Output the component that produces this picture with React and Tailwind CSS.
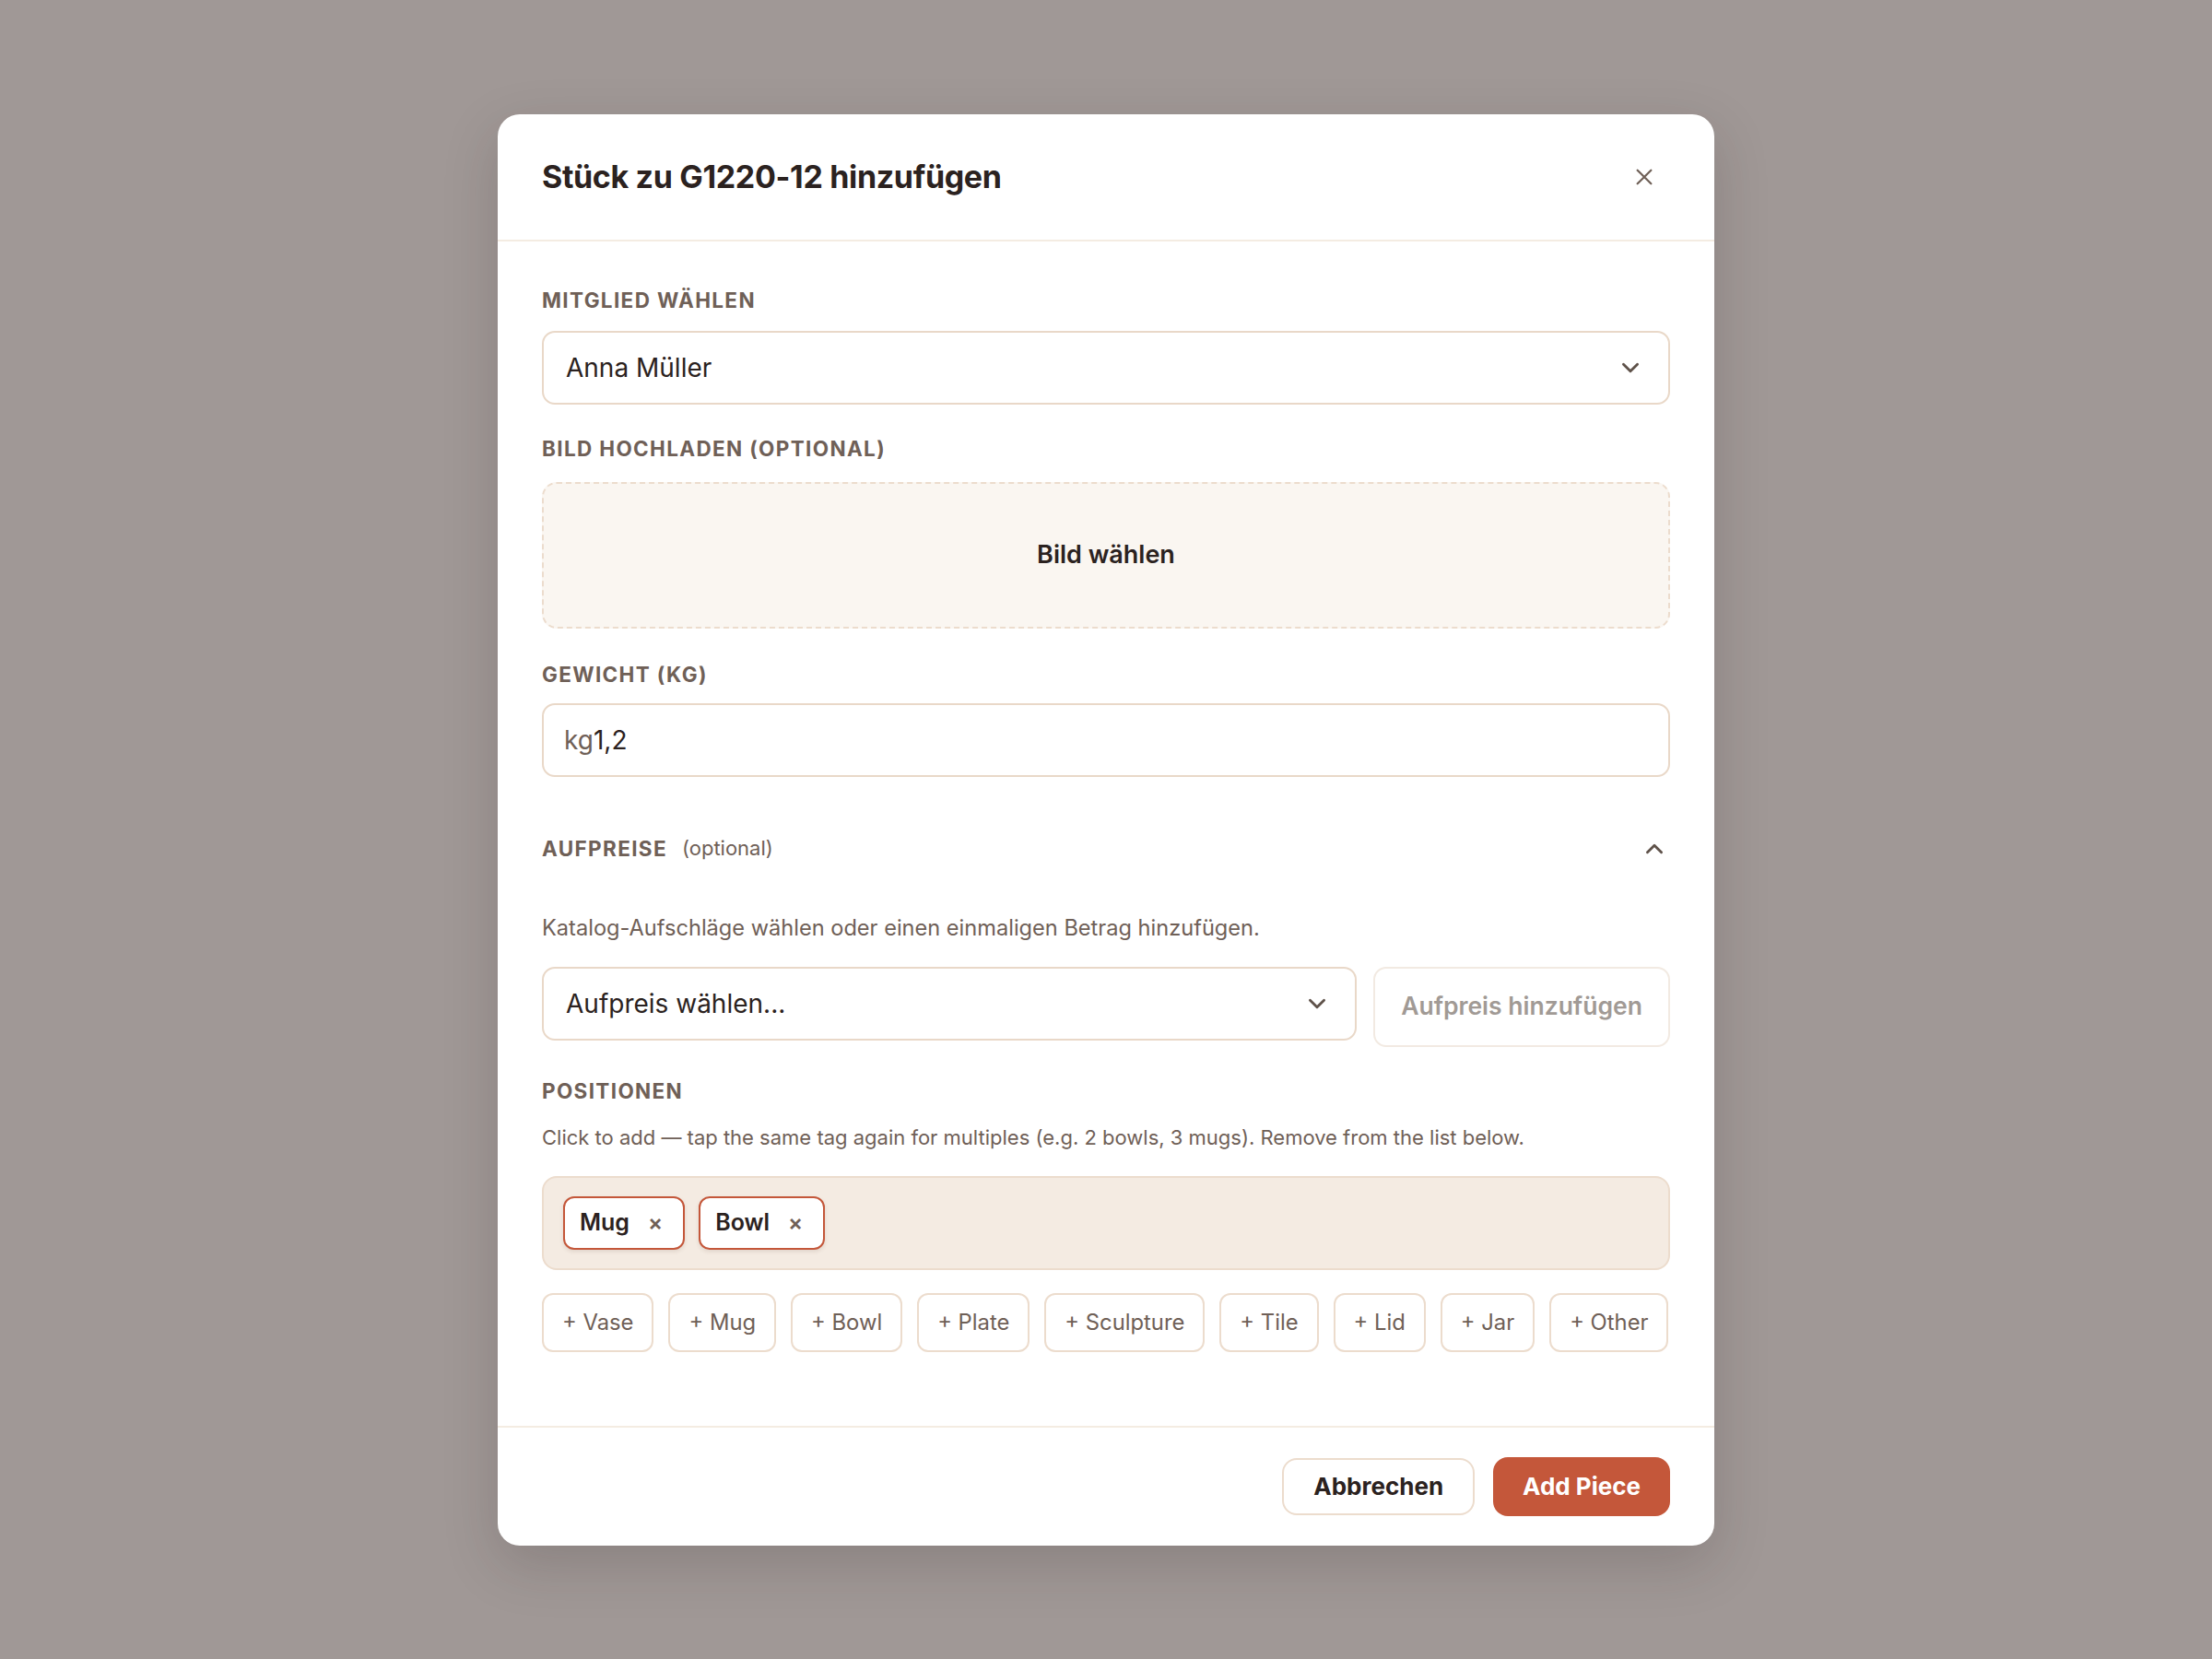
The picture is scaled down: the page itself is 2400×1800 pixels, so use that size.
import React from "react";

const Chevron = ({ up = false, className = "" }) => (
  <svg
    viewBox="0 0 24 24"
    className={className}
    fill="none"
    stroke="currentColor"
    strokeWidth="2.6"
    strokeLinecap="round"
    strokeLinejoin="round"
  >
    {up ? <path d="M5 15.5 12 8.5l7 7" /> : <path d="M5 8.5l7 7 7-7" />}
  </svg>
);

const CloseIcon = ({ className = "" }) => (
  <svg viewBox="0 0 24 24" className={className} fill="none" stroke="currentColor" strokeWidth="2.4" strokeLinecap="round">
    <path d="M4 4l16 16M20 4 4 20" />
  </svg>
);

const Label = ({ children, className = "" }) => (
  <div className={`text-[22.5px] leading-[32px] font-bold tracking-[0.06em] uppercase text-[#6f6057] ${className}`}>
    {children}
  </div>
);

const items = ["Vase", "Mug", "Bowl", "Plate", "Sculpture", "Tile", "Lid", "Jar", "Other"];
const selected = ["Mug", "Bowl"];

export default function App() {
  return (
    <div className="min-h-[1800px] w-full bg-[#a09896] flex items-center justify-center font-[Inter,'Liberation_Sans',sans-serif] text-[#2b2220]">
      <div className="w-[1320px] bg-white rounded-[24px] shadow-[0_20px_60px_rgba(40,30,25,0.18)] flex flex-col">
        {/* header */}
        <div className="h-[138px] px-[48px] flex items-center justify-between border-b-2 border-[#f4ece2]">
          <h2 className="text-[34px] font-bold tracking-[-0.01em] text-[#2b2220]">Stück zu G1220-12 hinzufügen</h2>
          <button className="w-[40px] h-[40px] flex items-center justify-center text-[#6f6057] mr-[8px]">
            <CloseIcon className="w-[22px] h-[22px]" />
          </button>
        </div>

        {/* body */}
        <div className="px-[48px] pt-[48px] pb-[80px] flex flex-col">
          <Label>Mitglied wählen</Label>
          <div className="mt-[17px] h-[80px] border-2 border-[#e9d8c8] rounded-[14px] pl-[24px] pr-[28px] flex items-center justify-between">
            <span className="text-[28px]">Anna Müller</span>
            <Chevron className="w-[26px] h-[26px] text-[#5f524a]" />
          </div>

          <Label className="mt-[32px]">Bild hochladen (optional)</Label>
          <div className="mt-[20px] h-[159px] border-2 border-dashed border-[#ecdccd] rounded-[16px] bg-[#faf6f1] flex items-center justify-center">
            <span className="text-[27px] font-semibold text-[#2b2220]">Bild wählen</span>
          </div>

          <Label className="mt-[34px]">Gewicht (kg)</Label>
          <div className="mt-[15px] h-[80px] border-2 border-[#e9d8c8] rounded-[14px] pl-[22px] flex items-center text-[28px]">
            <span className="text-[#6f6057]">kg</span>
            <span className="text-[#2b2220]">1,2</span>
          </div>

          <div className="mt-[58px] h-[40px] flex items-center justify-between">
            <div className="flex items-center gap-[16px]">
              <Label>Aufpreise</Label>
              <span className="text-[22px] text-[#6f6057]">(optional)</span>
            </div>
            <Chevron up className="w-[26px] h-[26px] text-[#5f524a] mr-[4px]" />
          </div>

          <p className="mt-[48px] text-[23.6px] leading-[36px] text-[#6f6057]">
            Katalog-Aufschläge wählen oder einen einmaligen Betrag hinzufügen.
          </p>

          <div className="mt-[24px] flex items-start gap-[18px]">
            <div className="flex-1 h-[80px] border-2 border-[#e9d8c8] rounded-[14px] pl-[24px] pr-[28px] flex items-center justify-between">
              <span className="text-[28px]">Aufpreis wählen...</span>
              <Chevron className="w-[26px] h-[26px] text-[#5f524a]" />
            </div>
            <button className="w-[322px] h-[87px] border-2 border-[#f2eae2] rounded-[14px] text-[26.5px] font-semibold text-[#a19a95]">
              Aufpreis hinzufügen
            </button>
          </div>

          <Label className="mt-[32px]">Positionen</Label>
          <p className="mt-[18px] text-[22px] leading-[32px] text-[#6f6057]">
            Click to add — tap the same tag again for multiples (e.g. 2 bowls, 3 mugs). Remove from the list below.
          </p>

          <div className="mt-[26px] h-[102px] border-2 border-[#ecdccd] bg-[#f4ebe2] rounded-[16px] px-[21px] flex items-center gap-[15px]">
            {selected.map((s) => (
              <div
                key={s}
                className="h-[58px] border-2 border-[#c4573a] bg-white rounded-[12px] pl-[16px] pr-[22px] flex items-center gap-[20px] shadow-[0_2px_4px_rgba(80,50,30,0.12)]"
              >
                <span className="text-[25px] font-semibold text-[#2b2220]">{s}</span>
                <span className="text-[24px] font-semibold text-[#6f6057]">×</span>
              </div>
            ))}
          </div>

          <div className="mt-[25px] flex items-center gap-[16px]">
            {items.map((it) => (
              <button
                key={it}
                className="shrink-0 whitespace-nowrap h-[64px] border-2 border-[#ecdccd] rounded-[12px] px-[20px] text-[23.8px] text-[#6f6057] bg-white"
              >
                + {it}
              </button>
            ))}
          </div>
        </div>

        {/* footer */}
        <div className="border-t-2 border-[#f4ece2] h-[130px] px-[48px] flex items-center justify-end gap-[20px]">
          <button className="h-[62px] px-[32px] border-2 border-[#ecdccd] rounded-[16px] text-[26px] font-bold text-[#2b2220] bg-white">
            Abbrechen
          </button>
          <button className="h-[64px] px-[32px] rounded-[16px] text-[26px] font-bold text-white bg-[#c4573a]">
            Add Piece
          </button>
        </div>
      </div>
    </div>
  );
}
